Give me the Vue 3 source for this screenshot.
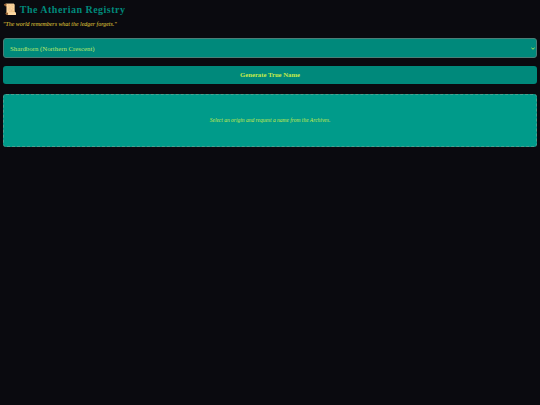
<template>
  <div class="page">
    <h1 class="title"><span class="scroll">📜</span> The Atherian Registry</h1>
    <p class="motto">"The world remembers what the ledger forgets."</p>

    <select v-model="origin" class="origin">
      <option v-for="o in origins" :key="o" :value="o">{{ o }}</option>
    </select>

    <button type="button" class="generate">Generate True Name</button>

    <div class="result">
      <p class="hint">Select an origin and request a name from the Archives.</p>
    </div>
  </div>
</template>

<script setup>
import { ref } from 'vue'

const origins = ['Shardborn (Northern Crescent)', 'Emberkin (Southern Reach)']
const origin = ref(origins[0])
</script>

<style>
html,
body {
  margin: 0;
  background: #0a0a0f;
}
</style>

<style scoped>
.page {
  min-height: 405px;
  box-sizing: border-box;
  padding: 3px;
  background: #0a0a0f;
  font-family: "Liberation Serif", "Times New Roman", serif;
  color: #c6e84a;
}

.title {
  margin: 0;
  font-size: 10px;
  line-height: 14px;
  font-weight: 700;
  letter-spacing: 0.48px;
  color: #00897b;
}

.scroll {
  font-size: 11px;
  line-height: 12px;
  letter-spacing: 0;
}

.motto {
  margin: 3px 0 0;
  font-size: 5.9px;
  line-height: 8px;
  font-style: italic;
  color: #e6d23c;
}

.origin {
  display: block;
  width: 100%;
  height: 20px;
  margin-top: 10px;
  padding: 0 6px;
  border: 1px solid #4a7f78;
  border-radius: 3px;
  appearance: none;
  background: #00897b url("data:image/svg+xml,%3Csvg xmlns='http://www.w3.org/2000/svg' width='4' height='3' viewBox='0 0 4 3'%3E%3Cpath d='M.4.6 2 2.3 3.6.6' fill='none' stroke='%23b9f05a' stroke-width='.9'/%3E%3C/svg%3E") no-repeat right 1px center;
  color: #b9e86a;
  font-family: inherit;
  font-size: 6.8px;
}

.generate {
  display: block;
  width: 100%;
  height: 18px;
  margin-top: 8px;
  padding: 0 0 1px;
  border: none;
  border-radius: 3px;
  background: #00897b;
  color: #c6ec4a;
  font-family: inherit;
  font-size: 6.7px;
  font-weight: 700;
}

.result {
  display: flex;
  align-items: center;
  justify-content: center;
  height: 53px;
  box-sizing: border-box;
  margin-top: 10px;
  padding-bottom: 1px;
  border: 1px dashed #4a9f90;
  border-radius: 3px;
  background: #009b8a;
}

.hint {
  margin: 0;
  font-size: 5.5px;
  font-style: italic;
  color: #c6ec4a;
}
</style>
